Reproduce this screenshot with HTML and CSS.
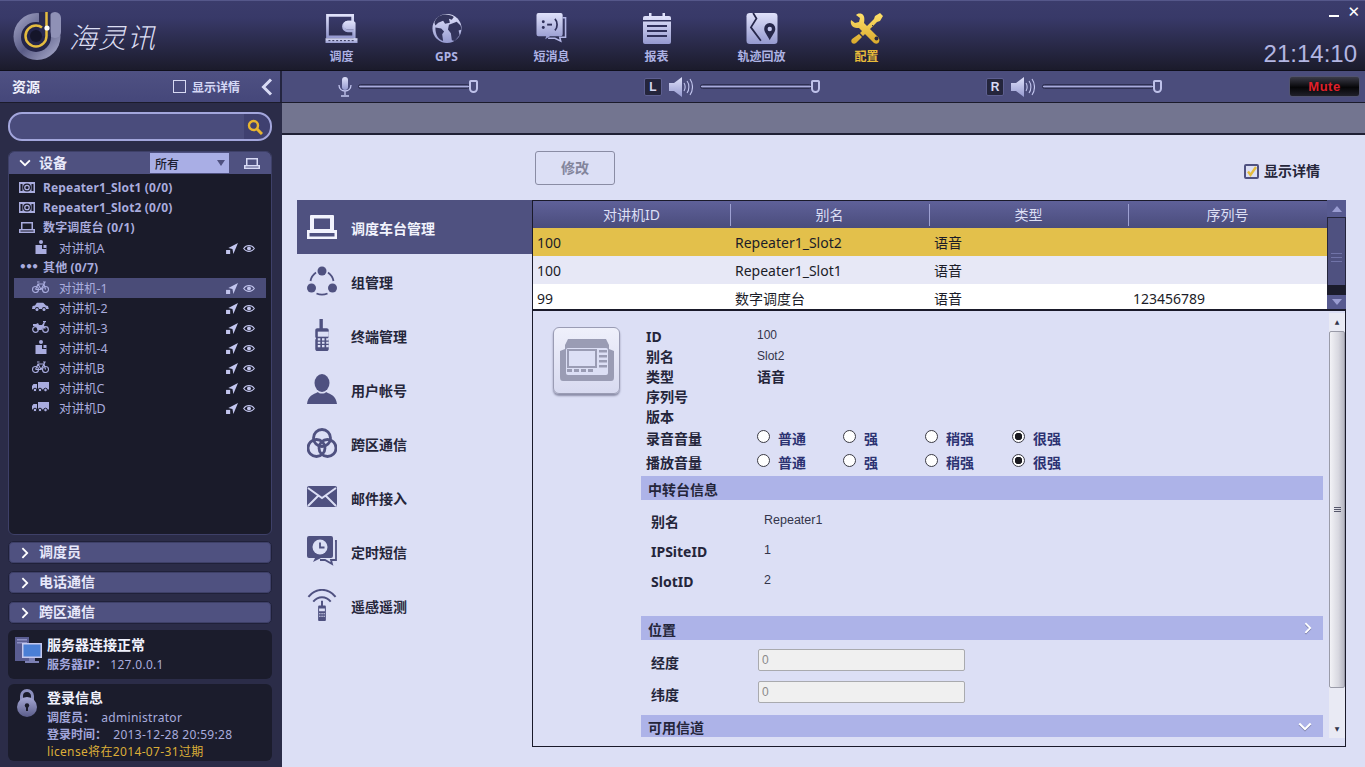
FILE: index.html
```html
<!DOCTYPE html>
<html lang="zh-CN">
<head>
<meta charset="utf-8">
<title>海灵讯</title>
<link rel="stylesheet" href="styles.css">
</head>
<body>
<svg class="defs" aria-hidden="true">
  <defs>
    <linearGradient id="navg" x1="0" y1="0" x2="0" y2="1"><stop offset="0" stop-color="#dfe1fa"/><stop offset="1" stop-color="#9599cf"/></linearGradient>
    <linearGradient id="yelg" x1="0" y1="0" x2="0" y2="1"><stop offset="0" stop-color="#ffe16a"/><stop offset="1" stop-color="#d9a92c"/></linearGradient>
    <linearGradient id="ringg" x1="0" y1="0" x2="1" y2="1"><stop offset="0" stop-color="#a9abcc"/><stop offset=".5" stop-color="#5a5c86"/><stop offset="1" stop-color="#b1b3d2"/></linearGradient>
    <linearGradient id="lockg" x1="0" y1="0" x2="0" y2="1"><stop offset="0" stop-color="#a6a8d4"/><stop offset="1" stop-color="#5a5c8a"/></linearGradient>
    <symbol id="i-rep" viewBox="0 0 16 11"><path fill="currentColor" d="M0 0h16v11H0zM1.500 2v7h2V2zm11 0v7h2V2z" fill-rule="evenodd"/><circle cx="8" cy="5.500" r="4" fill="#1a1b2a"/><circle cx="8" cy="5.500" r="2.200" fill="none" stroke="currentColor" stroke-width="1.300"/></symbol>
    <symbol id="i-con" viewBox="0 0 16 11"><path fill="currentColor" fill-rule="evenodd" d="M2 0h12v7h2v4H0V7h2zm1.500 1.500V7h9V1.500zM1.500 8.500v1h13v-1z"/></symbol>
    <symbol id="i-per" viewBox="0 0 12 14"><circle cx="6" cy="2" r="2" fill="currentColor"/><path fill="currentColor" d="M.5 5h11v9H.5z"/><path fill="#1a1b2a" d="M7 5h1.500v3H11.500v1H7z"/></symbol>
    <symbol id="i-bike" viewBox="0 0 17 12"><g fill="none" stroke="currentColor" stroke-width="1.100"><circle cx="3.500" cy="8.500" r="3"/><circle cx="13.500" cy="8.500" r="3"/><path d="M3.500 8.500 6 3h6l1.500 5.500M6 3l3 5.500h-5.500M9 8.500 12 3M5 1h2.500M11 1h2l-1 2"/></g></symbol>
    <symbol id="i-car" viewBox="0 0 17 9"><path fill="currentColor" d="M5 0h6l3 3 2 .6.800 2.900H14a2 2 0 0 0-4 0H7a2 2 0 0 0-4 0H0l.6-2.900L3 3z"/><circle cx="5" cy="7" r="1.500" fill="currentColor"/><circle cx="12" cy="7" r="1.500" fill="currentColor"/></symbol>
    <symbol id="i-moto" viewBox="0 0 17 12"><g fill="none" stroke="currentColor" stroke-width="1.200"><circle cx="3.500" cy="8.500" r="2.800"/><circle cx="13.500" cy="8.500" r="2.800"/></g><path fill="currentColor" d="M1 3h3l2-1 1 2h3l2-3 1 .5-1 3 2 3h-2l-1-1-1.500 2.500h-4L4 5 1 5zM11 0h3v1.200h-3z"/></symbol>
    <symbol id="i-truck" viewBox="0 0 17 10"><path fill="currentColor" d="M6 0h11v7.500H6zM1.500 2H5v5.500H0V4z"/><g fill="currentColor" stroke="#1a1b2a"><circle cx="3" cy="8" r="1.800"/><circle cx="8" cy="8" r="1.800"/><circle cx="13.500" cy="8" r="1.800"/></g></symbol>
    <symbol id="i-loc" viewBox="0 0 13 12"><path fill="currentColor" d="M13 0 2.500 5.500 7 6.500 8 12z"/><path fill="currentColor" d="M0 7.500h4.500V12H0z"/></symbol>
    <symbol id="i-eye" viewBox="0 0 13 9"><path fill="none" stroke="currentColor" stroke-width="1.100" d="M.7 4.500C3.500.3 9.500.3 12.300 4.500 9.500 8.700 3.500 8.700.7 4.500z"/><circle cx="6.500" cy="4.500" r="2.100" fill="currentColor"/></symbol>
    <symbol id="i-spk" viewBox="0 0 24 20"><path fill="url(#navg)" d="M0 6h5l8-6v20l-8-6H0z"/><g fill="none" stroke="#c4c7f0" stroke-width="1.100"><path d="M15 6c1.500 2 1.500 6 0 8M18 4c2.500 3 2.500 9 0 12M21 2c3.300 4.500 3.300 11.500 0 16"/></g></symbol>
    <symbol id="i-down" viewBox="0 0 16 10"><path fill="none" stroke="currentColor" stroke-width="2.400" d="M1.500 1.500 8 8l6.500-6.500"/></symbol>
    <symbol id="i-right" viewBox="0 0 10 16"><path fill="none" stroke="currentColor" stroke-width="2.400" d="M1.500 1.500 8 8l-6.500 6.500"/></symbol>
  </defs>
</svg>

<div class="app">
  <header class="top">
    <div class="brand">
      <svg class="logo" viewBox="0 0 48 48">
        <circle cx="24" cy="24.500" r="23.500" fill="url(#ringg)"/>
        <rect x="36" y="0" width="12" height="26" rx="6" fill="#8f91b6"/>
        <circle cx="23" cy="25" r="15" fill="#24254a"/>
        <rect x="26" y="0" width="11.500" height="24" fill="#2a2b52"/>
        <path fill="none" stroke="#e4bc3f" stroke-width="2.500" d="M33.500 0v24a10.500 10.500 0 1 1-10.500-10.500c2.500 0 4.500.8 6 2"/>
        <circle cx="23" cy="24" r="6" fill="#15152a"/>
        <circle cx="34" cy="16" r="2.600" fill="#fff"/>
      </svg>
      <span class="brand-name">海灵讯</span>
    </div>
    <nav class="mainnav">
      <a class="mainnav-item">
        <svg viewBox="0 0 34 32"><path fill="none" stroke="url(#navg)" stroke-width="2.800" d="M2 2.500h26v7h-5a4.500 4.500 0 0 0 0 9h6v6H2z"/><path fill="url(#navg)" d="M23 8h6l2 2v17h-2V17h-6a4.500 4.500 0 0 1 0-9z"/><path fill="url(#navg)" d="M0 26h33v5H0z"/><path stroke="#2a2b50" stroke-dasharray="2 2" d="M3 28.500h27"/></svg>
        <span>调度</span>
      </a>
      <a class="mainnav-item">
        <svg viewBox="0 0 32 32"><circle cx="16" cy="16" r="15" fill="url(#navg)"/><path fill="#33345c" d="M11 2c4-1 9 0 12 2l-2 3-3-1 1 4-5 1-2-3-5 2-3 3-1-3c1-4 4-7 8-8zM18 12l8-3 4 4 1 4-3 1 1 5-5 6-3-1-1-7-3-4zM4 15l6 1 3 3-2 3 1 7c-5-2-8-6-8-14z"/></svg>
        <span>GPS</span>
      </a>
      <a class="mainnav-item">
        <svg viewBox="0 0 32 32"><path fill="none" stroke="#b4b7e6" stroke-width="1.600" d="M27 5h3v20h-6l1 4-6-3h-7"/><path fill="url(#navg)" d="M2 0h23a2 2 0 0 1 2 2v20a2 2 0 0 1-2 2H14l-5 3 1-3H2a2 2 0 0 1-2-2V2a2 2 0 0 1 2-2z"/><g fill="#2f305a"><circle cx="7" cy="9" r="1.500"/><circle cx="7" cy="15" r="1.500"/><path d="M11 11h5v2h-5z"/></g><path fill="none" stroke="#2f305a" stroke-width="1.800" d="M19 6c3 3 3 9 0 12"/></svg>
        <span>短消息</span>
      </a>
      <a class="mainnav-item">
        <svg viewBox="0 0 28 31"><path fill="url(#navg)" d="M2 3h24a2 2 0 0 1 2 2v24a2 2 0 0 1-2 2H2a2 2 0 0 1-2-2V5a2 2 0 0 1 2-2z"/><path fill="#2f305a" d="M0 7h28v1.600H0zM4 12h20v2H4zM4 17h20v2H4zM4 22h20v2H4z"/><path fill="#dfe1fa" d="M6 0h2.500v6H6zM19.500 0H22v6h-2.500z"/></svg>
        <span>报表</span>
      </a>
      <a class="mainnav-item">
        <svg viewBox="0 0 28 28"><rect width="28" height="28" rx="3" fill="url(#navg)"/><path fill="none" stroke="#26274a" stroke-width="1.600" d="M6 0 9 5 4 13l9 12"/><path fill="#26274a" d="M21 9a5.200 5.200 0 0 1 5 5.500c0 3-3 6-5 10-2-4-5-7-5-10A5.200 5.200 0 0 1 21 9z"/><circle cx="21" cy="14.500" r="2" fill="#c4c7ee"/></svg>
        <span>轨迹回放</span>
      </a>
      <a class="mainnav-item is-on">
        <svg viewBox="0 0 32 31"><path fill="url(#yelg)" d="M11 1c-3-1-5 0-6 1l4 3-1 4-4 1-4-3c-1 4 1 8 6 8l2 0 15 15c2 1 4 1 5-1 1-2 0-4-1-5L13 10c1-5 0-8-2-9z"/><circle cx="25.500" cy="25.500" r="2" fill="#2a2a40"/><path fill="url(#yelg)" d="M29 0l3 3-3 5-3 1L12 23l-3-3L23 6l1-3zM8 21l3 3-6 6c-1 1-3 1-4 0s-1-3 0-4z"/><path stroke="#3a3a52" d="M21 12l3 3"/></svg>
        <span>配置</span>
      </a>
    </nav>
    <div class="sys">
      <div class="winbtns"><span class="win-min"></span><span class="win-close">✕</span></div>
      <div class="clock">21:14:10</div>
    </div>
  </header>

  <div class="toolbar">
    <div class="toolbar-left">
      <span class="tl-title">资源</span>
      <span class="tl-check"></span>
      <span class="tl-label">显示详情</span>
      <svg class="tl-back" viewBox="0 0 12 18"><path fill="none" stroke="#d9dbf5" stroke-width="3" d="M10 1.500 2.500 9l7.500 7.500"/></svg>
    </div>
    <div class="toolbar-right">
      <div class="audios">
        <div class="audio audio-mic">
          <svg class="mic" viewBox="0 0 14 20"><rect x="4" width="6" height="13" rx="3" fill="url(#navg)"/><path fill="none" stroke="#c4c7f0" stroke-width="1.300" d="M1 8c0 8 12 8 12 0M7 14v4M3 19h8"/></svg>
          <div class="slider"><span class="track"></span><span class="knob"></span></div>
        </div>
        <div class="audio">
          <span class="chan">L</span>
          <svg class="spk" viewBox="0 0 24 20"><use href="#i-spk"/></svg>
          <div class="slider"><span class="track"></span><span class="knob"></span></div>
        </div>
        <div class="audio">
          <span class="chan">R</span>
          <svg class="spk" viewBox="0 0 24 20"><use href="#i-spk"/></svg>
          <div class="slider"><span class="track"></span><span class="knob"></span></div>
        </div>
      </div>
      <button class="mute">Mute</button>
    </div>
  </div>

  <div class="main">
    <aside class="side">
      <div class="search">
        <svg class="search-ico" viewBox="0 0 16 16"><circle cx="6.500" cy="6.500" r="4.500" fill="none" stroke="#e8b52f" stroke-width="2.400"/><path stroke="#e8b52f" stroke-width="3" d="m10 10 5 5"/></svg>
      </div>
      <section class="devices">
        <div class="dev-head">
          <svg class="chev-d" viewBox="0 0 16 10"><use href="#i-down"/></svg>
          <span class="dev-title">设备</span>
          <span class="dev-select"><span class="dev-val">所有</span><i class="dev-caret"></i></span>
          <span class="dev-btn"><svg viewBox="0 0 16 11"><use href="#i-con"/></svg></span>
        </div>
        <ul class="tree">
          <li class="node group"><svg class="gi" viewBox="0 0 16 11"><use href="#i-rep"/></svg><span class="latin">Repeater1_Slot1 (0/0)</span></li>
          <li class="node group"><svg class="gi" viewBox="0 0 16 11"><use href="#i-rep"/></svg><span class="latin">Repeater1_Slot2 (0/0)</span></li>
          <li class="node group"><svg class="gi" viewBox="0 0 16 11"><use href="#i-con"/></svg><span class="latin">数字调度台 (0/1)</span></li>
          <li class="node leaf"><svg class="li" viewBox="0 0 12 14"><use href="#i-per"/></svg><span class="name">对讲机A</span><svg class="act" viewBox="0 0 13 12"><use href="#i-loc"/></svg><svg class="act2" viewBox="0 0 13 9"><use href="#i-eye"/></svg></li>
          <li class="node group"><span class="dots">•••</span><span class="latin">其他 (0/7)</span></li>
          <li class="node leaf is-sel"><svg class="li wide" viewBox="0 0 17 12"><use href="#i-bike"/></svg><span class="name">对讲机-1</span><svg class="act" viewBox="0 0 13 12"><use href="#i-loc"/></svg><svg class="act2" viewBox="0 0 13 9"><use href="#i-eye"/></svg></li>
          <li class="node leaf"><svg class="li wide" viewBox="0 0 17 9"><use href="#i-car"/></svg><span class="name">对讲机-2</span><svg class="act" viewBox="0 0 13 12"><use href="#i-loc"/></svg><svg class="act2" viewBox="0 0 13 9"><use href="#i-eye"/></svg></li>
          <li class="node leaf"><svg class="li wide" viewBox="0 0 17 12"><use href="#i-moto"/></svg><span class="name">对讲机-3</span><svg class="act" viewBox="0 0 13 12"><use href="#i-loc"/></svg><svg class="act2" viewBox="0 0 13 9"><use href="#i-eye"/></svg></li>
          <li class="node leaf"><svg class="li" viewBox="0 0 12 14"><use href="#i-per"/></svg><span class="name">对讲机-4</span><svg class="act" viewBox="0 0 13 12"><use href="#i-loc"/></svg><svg class="act2" viewBox="0 0 13 9"><use href="#i-eye"/></svg></li>
          <li class="node leaf"><svg class="li wide" viewBox="0 0 17 12"><use href="#i-bike"/></svg><span class="name">对讲机B</span><svg class="act" viewBox="0 0 13 12"><use href="#i-loc"/></svg><svg class="act2" viewBox="0 0 13 9"><use href="#i-eye"/></svg></li>
          <li class="node leaf"><svg class="li wide" viewBox="0 0 17 10"><use href="#i-truck"/></svg><span class="name">对讲机C</span><svg class="act" viewBox="0 0 13 12"><use href="#i-loc"/></svg><svg class="act2" viewBox="0 0 13 9"><use href="#i-eye"/></svg></li>
          <li class="node leaf"><svg class="li wide" viewBox="0 0 17 10"><use href="#i-truck"/></svg><span class="name">对讲机D</span><svg class="act" viewBox="0 0 13 12"><use href="#i-loc"/></svg><svg class="act2" viewBox="0 0 13 9"><use href="#i-eye"/></svg></li>
        </ul>
      </section>
      <div class="folds">
        <div class="fold"><svg viewBox="0 0 10 16"><use href="#i-right"/></svg><span>调度员</span></div>
        <div class="fold"><svg viewBox="0 0 10 16"><use href="#i-right"/></svg><span>电话通信</span></div>
        <div class="fold"><svg viewBox="0 0 10 16"><use href="#i-right"/></svg><span>跨区通信</span></div>
      </div>
      <div class="card card-server">
        <svg class="card-ico" viewBox="0 0 28 28"><path fill="#5a5d92" d="M1 0h14v24H1z"/><path fill="#8d90c4" d="M3 2h10v1.500H3zM3 5h10v1.500H3z"/><rect x="8" y="6" width="20" height="15" fill="#c4c8ee"/><rect x="9.500" y="7.500" width="17" height="12" fill="#4a7fd6"/><path fill="#7c80b4" d="M15 21h6v3h4v2H11v-2h4z"/></svg>
        <div class="card-text">
          <div class="card-title">服务器连接正常</div>
          <div class="card-line"><b>服务器IP：</b> <span class="card-val">127.0.0.1</span></div>
        </div>
      </div>
      <div class="card card-login">
        <svg class="lock" viewBox="0 0 20 28"><path fill="none" stroke="#8c8fbe" stroke-width="3" d="M4.500 12V7a5.500 5.500 0 0 1 11 0v5"/><circle cx="10" cy="18" r="10" fill="url(#lockg)"/><circle cx="10" cy="16.500" r="2.200" fill="#1a1b2a"/><path fill="#1a1b2a" d="M9 17h2v5H9z"/></svg>
        <div class="card-text">
          <div class="card-title">登录信息</div>
          <div class="card-line"><b>调度员：</b> &nbsp;<span class="card-val">administrator</span></div>
          <div class="card-line"><b>登录时间：</b> &nbsp;<span class="card-val">2013-12-28 20:59:28</span></div>
          <div class="card-lic">license将在2014-07-31过期</div>
        </div>
      </div>
    </aside>

    <main class="work">
      <div class="band"></div>
      <div class="content">
        <div class="actions">
          <button class="btn-edit">修改</button>
          <label class="detail-toggle">
            <svg viewBox="0 0 15 15"><rect x="1" y="1" width="13" height="13" rx="1" fill="#dcdff5" stroke="#4f5180" stroke-width="2"/><path fill="none" stroke="#e4bc3f" stroke-width="2.400" d="M4 7.500 6.500 11 12 3"/></svg>
            <span>显示详情</span>
          </label>
        </div>
        <div class="split">
          <ul class="catnav">
            <li class="cat is-on"><svg viewBox="0 0 30 24"><path fill="currentColor" fill-rule="evenodd" d="M4 0h22a1 1 0 0 1 1 1v14h3v9H0v-9h3V1a1 1 0 0 1 1-1zm3 3.500V14h16V3.500zM2.500 18v3.500h25V18z"/></svg><span>调度车台管理</span></li>
            <li class="cat"><svg viewBox="0 0 30 30"><circle cx="15" cy="5" r="4.500" fill="currentColor"/><circle cx="4.500" cy="22" r="4.500" fill="currentColor"/><circle cx="25.500" cy="22" r="4.500" fill="currentColor"/><path fill="none" stroke="currentColor" stroke-width="1.800" d="M9 6.500C5.500 9 4 12 3.500 15M21 6.500c3.500 2.500 5 5.500 5.500 8.500M9.500 27.500c3.500 1.500 7.500 1.500 11 0"/></svg><span>组管理</span></li>
            <li class="cat"><svg viewBox="0 0 30 38"><path fill="currentColor" d="M9 0h4v11h4.500c1.500 0 2.500 1 2.500 2.500v8l-1 1.500 1 1.500v11c0 1.500-1 2.500-2.500 2.500h-11C5 38 4 37 4 35.500v-11l1-1.500-1-1.500v-8C4 12 5 11 6.500 11H9z" transform="translate(3)"/><g fill="#dcdff5"><path d="M10 15h13v6H10z"/><path d="M10 23h3v2.500h-3zM15 23h3v2.500h-3zM20 23h3v2.500h-3zM10 27h3v2.500h-3zM15 27h3v2.500h-3zM20 27h3v2.500h-3zM10 31h3v2.500h-3zM15 31h3v2.500h-3zM20 31h3v2.500h-3z"/></g></svg><span>终端管理</span></li>
            <li class="cat"><svg viewBox="0 0 30 30"><ellipse cx="15" cy="9" rx="7.500" ry="9" fill="currentColor"/><path fill="currentColor" d="M11 18c1 2 7 2 8 0 5 2.500 10 3.500 11 12H0c1-8.500 6-9.500 11-12z"/></svg><span>用户帐号</span></li>
            <li class="cat"><svg viewBox="0 0 30 30"><g fill="none" stroke="currentColor" stroke-width="2.800"><circle cx="15" cy="10" r="8.500"/><circle cx="9.500" cy="20" r="8.500"/><circle cx="20.500" cy="20" r="8.500"/></g></svg><span>跨区通信</span></li>
            <li class="cat"><svg viewBox="0 0 30 22"><rect width="30" height="21" rx="2" fill="currentColor"/><path fill="none" stroke="#dcdff5" stroke-width="2" d="m1 2 14 10L29 2M1 20l10-10M29 20 19 10"/></svg><span>邮件接入</span></li>
            <li class="cat"><svg viewBox="0 0 30 30"><path fill="none" stroke="currentColor" stroke-width="1.800" d="M28 5h1v19h-5l1 4-7-4h-5"/><path fill="currentColor" d="M2 0h22a2 2 0 0 1 2 2v18a2 2 0 0 1-2 2H14l-8 4 2-4H2a2 2 0 0 1-2-2V2a2 2 0 0 1 2-2z"/><circle cx="13" cy="11" r="7.500" fill="#dcdff5"/><path fill="none" stroke="currentColor" stroke-width="1.800" d="M13 6.500V11.500h4.500"/></svg><span>定时短信</span></li>
            <li class="cat"><svg viewBox="0 0 30 33"><g fill="none" stroke="currentColor" stroke-width="2"><path d="M1 8c8-9.500 20-9.500 28 0M6 13c5-6 13-6 18 0"/></g><path fill="currentColor" d="M14 12h2v5h1.500c1 0 1.500 .5 1.500 1.500V32c0 .5-.5 1-1 1h-6c-.5 0-1-.5-1-1V18.500c0-1 .5-1.500 1.500-1.500H14z"/><path fill="#dcdff5" d="M12 20h6v3h-6zM12 25h1.500v1H12zM14.300 25h1.500v1h-1.500zM16.500 25H18v1h-1.500zM12 27.500h1.500v1H12zM14.300 27.500h1.500v1h-1.500zM16.500 27.500H18v1h-1.500z"/></svg><span>遥感遥测</span></li>
          </ul>
          <div class="panes">
            <div class="list">
              <div class="grid">
                <div class="g-head"><span>对讲机ID</span><span>别名</span><span>类型</span><span>序列号</span></div>
                <div class="g-row is-sel"><span>100</span><span>Repeater1_Slot2</span><span>语音</span><span></span></div>
                <div class="g-row is-alt"><span>100</span><span>Repeater1_Slot1</span><span>语音</span><span></span></div>
                <div class="g-row is-last"><span>99</span><span>数字调度台</span><span>语音</span><span>123456789</span></div>
              </div>
              <div class="vbar-dark">
                <span class="vd-btn"><i class="tri-up"></i></span>
                <span class="vd-thumb"><i></i><i></i><i></i></span>
                <span class="vd-rest"></span>
                <span class="vd-btn vd-btn-b"><i class="tri-down"></i></span>
              </div>
            </div>
            <div class="detail">
              <div class="d-icon-col">
                <div class="d-icon">
                  <svg viewBox="0 0 56 46"><path fill="#9a9cb4" d="M9 1h38l3 6v4l5 2v26c0 3-1 4-3 4H4c-2 0-3-1-3-4V13l5-2V7z"/><rect x="7" y="10" width="42" height="27" rx="2" fill="#dcdff5"/><rect x="9" y="12" width="28" height="17" fill="#dcdff5" stroke="#9a9cb4" stroke-width="2"/><path fill="#9a9cb4" d="M40 12h8v2.500h-8zM40 17h8v2.500h-8zM40 22h8v2.500h-8zM40 27h8v2.500h-8zM8 31h5v3H8zM15 31h5v3h-5zM22 31h5v3h-5zM29 31h5v3h-5z"/></svg>
                </div>
              </div>
              <div class="d-body">
                <div class="kv"><b>ID</b><span>100</span></div>
                <div class="kv"><b>别名</b><span>Slot2</span></div>
                <div class="kv"><b>类型</b><b class="kv-strong">语音</b></div>
                <div class="kv"><b>序列号</b><span></span></div>
                <div class="kv"><b>版本</b><span></span></div>
                <div class="kv kv-vol"><b>录音音量</b><div class="opts"><span class="opt"><i class="radio"></i>普通</span><span class="opt"><i class="radio"></i>强</span><span class="opt"><i class="radio"></i>稍强</span><span class="opt"><i class="radio is-on"></i>很强</span></div></div>
                <div class="kv kv-vol"><b>播放音量</b><div class="opts"><span class="opt"><i class="radio"></i>普通</span><span class="opt"><i class="radio"></i>强</span><span class="opt"><i class="radio"></i>稍强</span><span class="opt"><i class="radio is-on"></i>很强</span></div></div>
                <div class="sec"><span class="sec-t">中转台信息</span></div>
                <div class="rep-list">
                  <div class="rep"><b>别名</b><span>Repeater1</span></div>
                  <div class="rep"><b class="latin-b">IPSiteID</b><span>1</span></div>
                  <div class="rep"><b class="latin-b">SlotID</b><span>2</span></div>
                </div>
                <div class="sec sec-loc"><span class="sec-t">位置</span><svg viewBox="0 0 10 16"><use href="#i-right"/></svg></div>
                <div class="coords">
                  <div class="coord"><b>经度</b><input class="coord-in" value="0" disabled></div>
                  <div class="coord"><b>纬度</b><input class="coord-in" value="0" disabled></div>
                </div>
                <div class="sec sec-chan"><span class="sec-t">可用信道</span><svg class="sec-down" viewBox="0 0 16 10"><use href="#i-down"/></svg></div>
              </div>
              <div class="vbar">
                <span class="vb-arrow">▲</span>
                <span class="vb-thumb"><i></i><i></i><i></i></span>
                <span class="vb-track"></span>
                <span class="vb-arrow">▼</span>
              </div>
            </div>
          </div>
        </div>
      </div>
    </main>
  </div>
</div>
</body>
</html>
```

FILE: styles.css
```css
* { box-sizing: border-box; }
html, body { margin: 0; height: 100%; overflow: hidden; }
body { font-family: "Noto Sans", "Noto Sans CJK SC", sans-serif; font-size: 13px; background: #2b2c48; }
.defs { width: 0; height: 0; display: block; }
ul { list-style: none; margin: 0; padding: 0; }
.app { width: 1365px; height: 767px; display: flex; flex-direction: column; overflow: hidden; }

/* header */
.top { height: 71px; flex: none; display: flex; background: linear-gradient(#3b3c6c 0, #383968 25%, #1b1b2b 100%); border-top: 1px solid #55578a; border-bottom: 1px solid #0f0f1c; }
.brand { width: 282px; display: flex; align-items: center; padding: 0 0 0 13px; flex: none; }
.logo { width: 48px; height: 48px; flex: none; margin-top: 1px; }
.brand-name { margin-left: 8px; font: italic 300 28px/1 "Noto Sans CJK SC", sans-serif; color: #dcdef3; letter-spacing: 1px; }
.mainnav { display: flex; margin-left: 7px; }
.mainnav-item { width: 105px; display: flex; flex-direction: column; align-items: center; color: #adb2e4; font-weight: 700; font-size: 12px; line-height: 16px; padding-top: 12px; }
.mainnav-item svg { height: 31px; width: 36px; display: block; margin-bottom: 5px; }
.mainnav-item.is-on { color: #e8bb3a; }
.sys { margin-left: auto; width: 110px; padding-right: 8px; display: flex; flex-direction: column; align-items: flex-end; }
.winbtns { display: flex; align-items: center; gap: 8px; height: 22px; color: #fff; margin-right: -3px; }
.win-min { width: 10px; height: 2px; background: #fff; margin-top: 7px; }
.win-close { font: 700 15px/1 "DejaVu Sans", sans-serif; }
.clock { margin-top: 17px; font: 400 24px/28px "Liberation Sans", sans-serif; color: #b3b6e2; }

/* toolbar */
.toolbar { height: 32px; flex: none; display: flex; background: #4b4d7c; border-bottom: 1px solid #1b1b2b; }
.toolbar-left { width: 282px; flex: none; display: flex; align-items: center; padding-left: 12px; background: linear-gradient(#4f5183, #45477a); border-right: 2px solid #242540; color: #fff; }
.tl-title { font-weight: 700; font-size: 14px; color: #eeeffc; width: 160px; padding-bottom: 2px; }
.tl-check { width: 13px; height: 13px; border: 1px solid #d7d9f3; margin: 0 6px 0 1px; }
.tl-label { font-weight: 700; font-size: 12px; color: #d4d7f5; }
.tl-back { width: 12px; height: 18px; margin-left: 21px; }
.toolbar-right { flex: 1; display: flex; align-items: center; justify-content: space-between; padding: 0 5px 0 56px; }
.audios { display: flex; gap: 166px; height: 100%; }
.audio { display: flex; align-items: center; width: 176px; height: 100%; }
.audio-mic { width: 140px; }
.mic { width: 14px; height: 20px; margin-right: 6px; flex: none; }
.chan { width: 18px; height: 18px; flex: none; border-radius: 2px; background: #24253c; border: 1px solid #5d5f90; color: #d7d9f3; font: 700 12px/16px "Liberation Sans", sans-serif; text-align: center; margin-right: 7px; }
.spk { width: 24px; height: 20px; flex: none; margin-right: 7px; }
.slider { flex: 1; display: flex; align-items: center; }
.track { flex: 1; height: 5px; border-radius: 3px; background: linear-gradient(#3a3c64, #a9acdc 50%, #3a3c64); border: 1px solid #2e2f52; }
.knob { width: 9px; height: 13px; margin-left: -1px; border-radius: 2px 2px 5px 5px; background: #4b4d7c; border: 2px solid #bfc2ea; flex: none; }
.mute { width: 71px; height: 21px; padding: 0; border: 1px solid #50526f; border-radius: 3px; background: linear-gradient(#3b3b48, #060608 55%, #20202a); color: #e0202a; font: 700 13px/19px "Liberation Sans", sans-serif; letter-spacing: .5px; }

/* layout */
.main { flex: 1; display: flex; min-height: 0; }
.side { width: 282px; flex: none; padding: 9px 10px 0 8px; background: #2b2c48; display: flex; flex-direction: column; }
.search { height: 29px; border: 2px solid #a3a6dc; border-radius: 14px; background: linear-gradient(90deg, #4a4c7c 90%, #3f4070 90%); display: flex; align-items: center; justify-content: flex-end; padding-right: 7px; flex: none; }
.search-ico { width: 16px; height: 16px; }
.devices { height: 384px; margin-top: 10px; border: 1px solid #3e4068; border-radius: 6px; background: #1a1b2a; overflow: hidden; flex: none; }
.dev-head { height: 22px; display: flex; align-items: center; background: #4f5180; padding-left: 10px; color: #e8e9fa; }
.chev-d { width: 12px; height: 8px; color: #fff; }
.dev-title { margin-left: 8px; font-weight: 700; font-size: 14px; width: 111px; padding-bottom: 2px; }
.dev-select { width: 79px; height: 20px; background: #a9aee5; color: #1c1d30; font-size: 12px; line-height: 20px; padding: 0 4px 0 5px; display: flex; align-items: center; justify-content: space-between; font-weight: 500; }
.dev-val { padding-top: 3px; }
.dev-caret { width: 0; height: 0; border: 4px solid transparent; border-top: 6px solid #4f5180; border-bottom: 0; }
.dev-btn { flex: 1; display: flex; justify-content: center; color: #d8daf5; padding-left: 4px; }
.dev-btn svg { width: 16px; height: 11px; }
.tree { padding: 4px 5px 0; }
.node { height: 20px; display: flex; align-items: center; color: #a9acde; padding-bottom: 2px; }
.group { font-weight: 700; font-size: 12px; padding-left: 5px; }
.group .gi { width: 16px; height: 11px; margin-right: 8px; flex: none; }
.latin { font-size: 12px; letter-spacing: .15px; }
.dots { width: 16px; margin-right: 8px; font: 700 12px/1 "DejaVu Sans", sans-serif; letter-spacing: -1.500px; text-align: center; }
.leaf { font-size: 12.500px; padding-left: 21px; }
.leaf .li { width: 12px; height: 14px; flex: none; }
.leaf .li.wide { width: 17px; height: 12px; margin-left: -3px; margin-right: -2px; }
.leaf .name { margin-left: 12px; flex: 1; }
.leaf .act { width: 12px; height: 11px; margin: 2px 5px 0 0; color: #c2c5ee; }
.leaf .act2 { width: 12px; height: 9px; margin: 2px 11px 0 0; color: #c2c5ee; }
.leaf.is-sel { background: #4a4c78; }
.folds { margin-top: 6px; display: flex; flex-direction: column; gap: 7px; flex: none; }
.fold { height: 23px; display: flex; align-items: center; border: 1px solid #20213a; border-radius: 5px; background: #4f5180; color: #e6e7fa; font-weight: 700; font-size: 14px; padding: 0 0 3px 12px; box-shadow: 0 0 0 1px #3e4068 inset; }
.fold svg { width: 8px; height: 12px; margin: 3px 10px 0 0; color: #fff; }
.card { flex: none; background: #1b1c2c; border-radius: 6px; display: flex; color: #a9acde; font-size: 12px; }
.card-server { height: 49px; margin-top: 6px; padding: 6px 0 0 6px; }
.card-login { height: 77px; margin-top: 5px; padding: 5px 0 0 9px; }
.card-ico { width: 28px; height: 28px; flex: none; margin-top: 1px; }
.lock { width: 20px; height: 28px; flex: none; margin: 0 10px 0 0; }
.card-server .card-text { margin-left: 5px; }
.card-title { font-weight: 700; font-size: 14px; line-height: 18px; color: #f0f1fc; margin-bottom: 2px; }
.card-line { line-height: 17px; font-size: 12px; white-space: nowrap; }
.card-server .card-line { margin-top: 2px; }
.card-line b { color: #a2a6db; }
.card-val { letter-spacing: .3px; }
.card-lic { line-height: 17px; color: #dcae38; font-size: 12px; letter-spacing: .35px; }

/* work area */
.work { flex: 1; display: flex; flex-direction: column; min-width: 0; background: #dcdff5; }
.band { height: 32px; flex: none; background: #737590; border-bottom: 2px solid #1f2034; }
.content { flex: 1; min-height: 0; padding: 0 19px 0 15px; }
.actions { height: 65px; display: flex; align-items: flex-start; padding: 16px 26px 0 238px; justify-content: space-between; }
.btn-edit { width: 80px; height: 34px; background: #dcdff5; border: 1px solid #8a8ca4; border-radius: 3px; color: #83859c; font: 700 14px/30px "Noto Sans CJK SC", sans-serif; padding: 0 0 2px; }
.detail-toggle { display: flex; align-items: center; gap: 5px; margin-top: 9px; font-weight: 700; font-size: 14px; color: #25263a; }
.detail-toggle svg { width: 15px; height: 15px; margin-top: 2px; }
.split { display: flex; }
.catnav { width: 235px; flex: none; }
.cat { height: 54px; display: flex; align-items: center; font-weight: 700; font-size: 14px; color: #25263a; }
.cat span { padding-top: 2px; }
.cat svg { width: 30px; height: 32px; margin-left: 10px; margin-right: 14px; color: #4f5180; flex: none; }
.cat.is-on { background: #4f5180; color: #f2f3fd; }
.cat.is-on svg { color: #f2f3fd; }
.panes { width: 814px; flex: none; }
.list { display: flex; height: 109px; }
.grid { width: 795px; flex: none; border: 1px solid #1a1a2a; border-width: 1px 0 0 1px; font-size: 14px; color: #1b1c28; }
.g-head { height: 27px; display: grid; grid-template-columns: 197px 199px 199px 199px; background: linear-gradient(#5f6199, #4a4c7c); color: #dcdff5; text-align: center; line-height: 27px; font-size: 14px; }
.g-head span + span { position: relative; }
.g-head span + span::before { content: ""; position: absolute; left: 0; top: 3px; bottom: 2px; width: 1px; background: #9ea1d2; }
.g-row { height: 28px; display: grid; grid-template-columns: 198px 199px 199px 199px; line-height: 29px; background: #fff; white-space: nowrap; }
.g-row span { padding-left: 4px; }
.g-row.is-sel { background: #e3c04b; }
.g-row.is-alt { background: #e7e8f6; }
.g-row.is-last { height: 25px; overflow: hidden; }
.vbar-dark { width: 19px; flex: none; display: flex; flex-direction: column; background: #4f5180; }
.vd-btn { height: 17px; background: #575a90; display: flex; align-items: center; justify-content: center; }
.vd-btn-b { height: 14px; }
.tri-up { width: 0; height: 0; border: 5px solid transparent; border-top: 0; border-bottom: 6px solid #9a9dd2; }
.tri-down { width: 0; height: 0; border: 5px solid transparent; border-bottom: 0; border-top: 6px solid #9a9dd2; }
.vd-thumb { height: 68px; background: #4f5180; border: 1px solid #24253c; border-width: 1px 1px 0 1px; display: flex; flex-direction: column; justify-content: center; gap: 3px; padding: 12px 3px 0; }
.vd-thumb i { height: 1px; background: #7073a8; }
.vd-rest { height: 10px; background: #1b1c2c; }
.detail { height: 438px; display: flex; background: #dcdff5; border: 1px solid #1a1a2a; border-top: 2px solid #1a1a2a; overflow: hidden; }
.d-icon-col { width: 108px; flex: none; padding: 16px 0 0 20px; }
.d-icon { width: 67px; height: 67px; border: 1px solid #9a9cb4; border-radius: 6px; background: linear-gradient(#eff0fb, #d8daf0); box-shadow: 0 2px 2px #8c8ea8; display: flex; align-items: center; justify-content: center; }
.d-icon svg { width: 56px; height: 46px; }
.d-body { width: 682px; flex: none; padding-top: 15px; height: 427px; overflow: hidden; color: #24253a; }
.kv { height: 20px; display: grid; grid-template-columns: 111px 1fr; padding-left: 5px; align-items: center; font-size: 14px; }
.kv b { font-weight: 700; }
.kv span { font: 12px/1 "Liberation Sans", "Noto Sans CJK SC", sans-serif; color: #33344a; }
.kv:first-child span { margin-top: -2px; }
.kv-vol { height: 24px; }
.opts { display: grid; grid-template-columns: 86px 82px 87px auto; }
.kv .opt { display: flex; align-items: center; gap: 8px; font: 700 14px/1 "Noto Sans CJK SC", sans-serif; color: #2c3272; }
.radio { width: 13px; height: 13px; border: 1px solid #3a3a44; border-radius: 50%; background: #fff; margin-top: -3px; flex: none; }
.radio.is-on { background: radial-gradient(circle, #1a1a20 0 3.500px, #fff 4px); }
.sec { height: 24px; margin-top: 2px; padding: 0 11px 0 7px; background: #adb3e8; font-weight: 700; font-size: 14px; line-height: 20px; color: #24253a; display: flex; align-items: center; justify-content: space-between; }
.sec-t { padding-top: 3px; }
.sec svg { width: 8px; height: 12px; color: #fff; filter: drop-shadow(0 1px 0 #7a7ea8); }
.sec .sec-down { width: 14px; height: 9px; }
.rep-list { padding-top: 6px; height: 116px; }
.rep { height: 30px; display: grid; grid-template-columns: 113px 1fr; padding-left: 10px; align-items: center; font-size: 14px; }
.rep span { font: 12.500px/1 "Liberation Sans", sans-serif; color: #33344a; margin-top: -1px; }
.latin-b { font-family: "Noto Sans", sans-serif; }
.sec-loc { margin-top: 0; }
.coords { padding-top: 4px; }
.coord { height: 32px; display: grid; grid-template-columns: 107px 207px; padding-left: 10px; align-items: center; font-size: 14px; }
.coord b { padding-top: 3px; }
.coord-in { height: 22px; width: 207px; border: 1px solid #a9aaae; border-radius: 2px; background: #f0f0f0; padding: 0 3px; font: 12px "Liberation Sans", sans-serif; color: #8a8a8a; margin: 0; }
.sec-chan { margin-top: 7px; height: 22px; }
.vbar { width: 16px; flex: none; margin-left: 6px; display: flex; flex-direction: column; background: #e9eaf4; height: 425px; margin-top: 2px; }
.vb-arrow { height: 18px; font-size: 6px; line-height: 18px; text-align: center; color: #33344a; flex: none; font-family: "DejaVu Sans", sans-serif; }
.vb-thumb { height: 357px; border: 1px solid #9a9ba8; border-radius: 2px; background: linear-gradient(90deg, #f2f2f6, #d8d8e0 60%, #b8b8c4); display: flex; flex-direction: column; justify-content: center; align-items: center; gap: 1px; flex: none; }
.vb-thumb i { width: 7px; height: 1px; background: #55566a; }
.vb-track { flex: 1; }
```
